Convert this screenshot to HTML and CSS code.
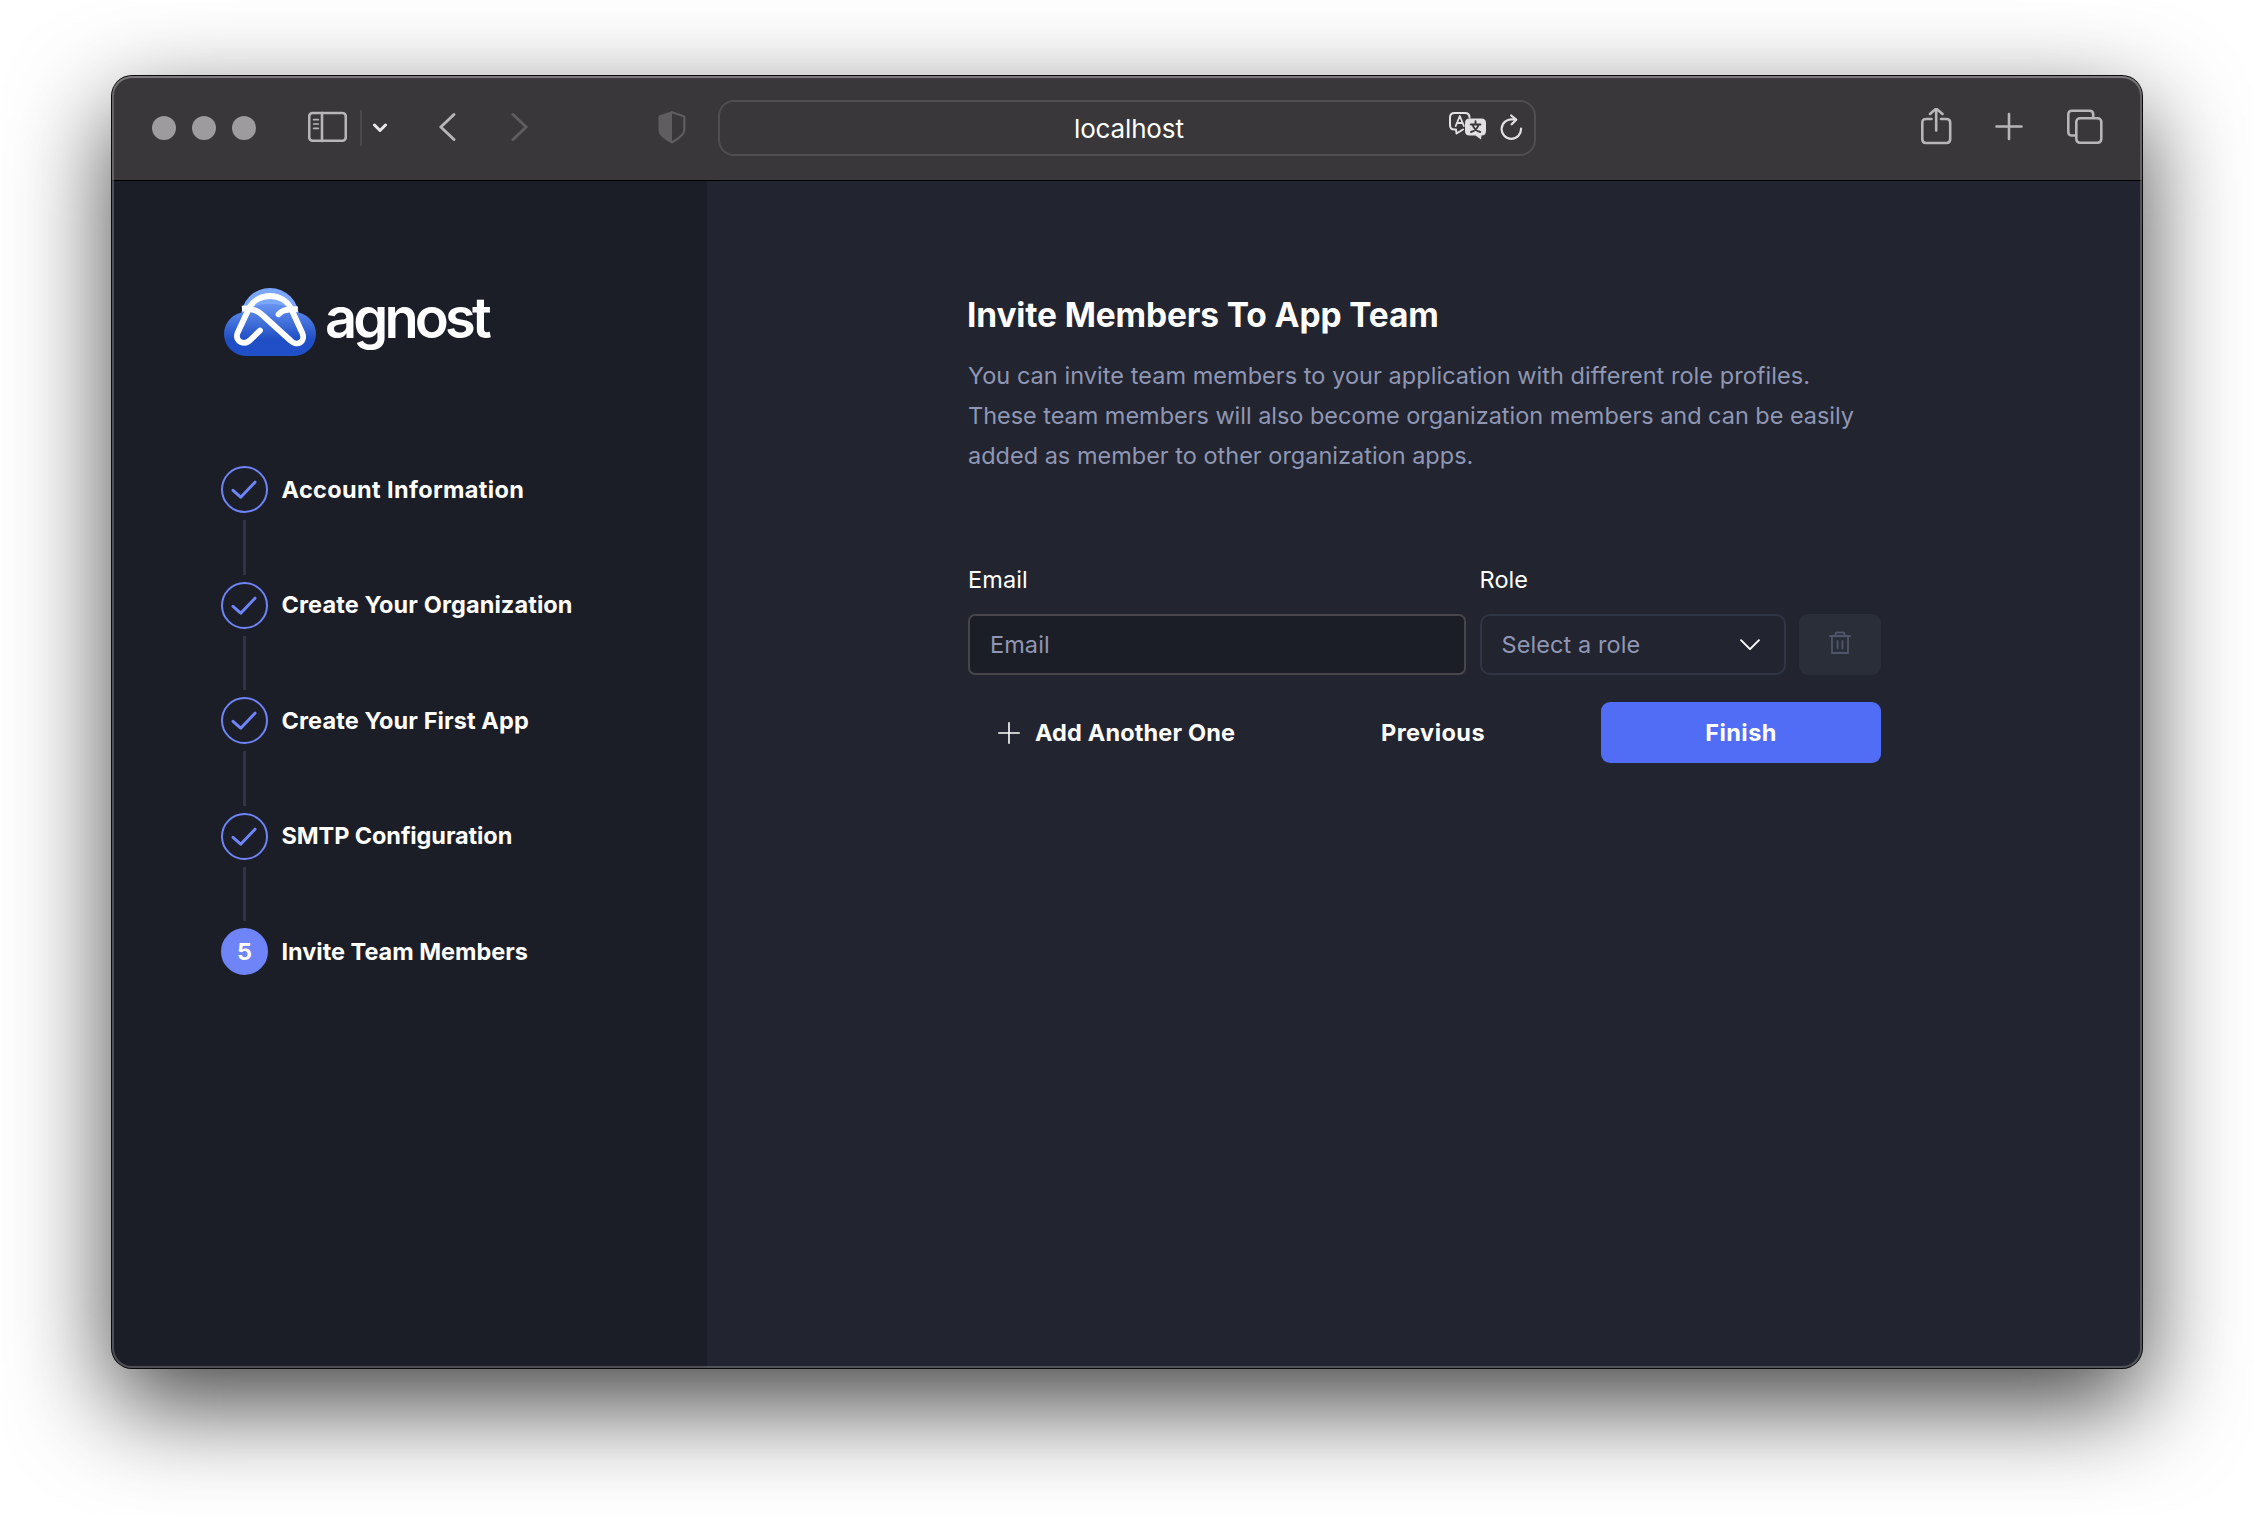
FILE: index.html
```
<!DOCTYPE html>
<html lang="en">
<head>
<meta charset="utf-8">
<title>Invite Members</title>
<link rel="stylesheet" href="styles.css">
</head>
<body>
<div class="window">
  <header class="toolbar">
    <div class="lights"><i></i><i></i><i></i></div>
    <svg class="ico side" width="39" height="40" viewBox="0 0 39 40"><rect x="1.2" y="5" width="36.6" height="27.8" rx="3.5"/><path d="M14 5v28"/><path class="fine" d="M5.7 11.7h4.6M5.7 16h4.6M5.7 20.4h4.6"/></svg>
    <span class="divider"></span>
    <svg class="ico menu" width="14" height="40" viewBox="0 0 14 40"><path d="M1.5 17l5.5 5.5 5.500-5.500"/></svg>
    <svg class="ico back" width="17" height="40" viewBox="0 0 17 40"><path d="M15 6.500L1.800 19 15 31.500"/></svg>
    <svg class="ico forward" width="17" height="40" viewBox="0 0 17 40"><path d="M2 6.500L15.200 19 2 31.500"/></svg>
    <svg class="shield" width="28" height="40" viewBox="0 0 28 40"><path class="half" d="M14 3.200L1.500 7.200Q.5 7.600 .5 8.800V22c0 6 7 10 13.500 13.500z"/><path class="line" d="M14 4.300L25.700 8.200q.6.300.6 1V22c0 5-6.300 9-12.300 12.300"/></svg>
    <div class="address">
      <span class="host">localhost</span>
      <svg class="translate" width="38" height="30" viewBox="0 0 38 30"><path class="bubble" d="M14 17.500L7.500 21.500 7 17.500H5.500Q1 17.500 1 13V5.500Q1 1 5.500 1H16q4.500 0 4.500 4.500"/><path class="a" d="M6.700 14L10.800 4l4.100 10M8 11h5.400"/><path class="solid" d="M20.500 6.500h12q4.500 0 4.500 4.500v8q0 4.500-4.500 4.500l-.5 4-5.500-4h-6q-4.500 0-4.500-4.500v-8q0-4.500 4.500-4.500z"/><path class="glyph" d="M26.500 9.200v3M21.800 12.500h9.600M23.500 12.700q2 5.500 7.700 7.300M29.700 12.700q-2 5.500-7.700 7.300"/></svg>
      <svg class="reload" width="23" height="27" viewBox="0 0 23 27"><path d="M21 14.500A9.700 9.700 0 1 1 12.500 5.500H16M11.200 1.500l5 4.200-4.500 4.600"/></svg>
    </div>
    <svg class="ico share" width="31" height="40" viewBox="0 0 31 40"><path d="M10.500 11H5q-3.700 0-3.700 3.700v16.600q0 3.700 3.700 3.700h20.500q3.700 0 3.700-3.700V14.700q0-3.700-3.700-3.700h-5.500M15.200 22.500V1M9 6l6.200-5.500L21.500 6"/></svg>
    <svg class="ico plus" width="28" height="40" viewBox="0 0 28 40"><path d="M14 6v25M1.500 18.500h25"/></svg>
    <svg class="ico tabs" width="36" height="40" viewBox="0 0 36 40"><path d="M9 27.500H5q-3.700 0-3.700-3.700V6.500q0-3.700 3.700-3.700h17.500q3.700 0 3.700 3.700v2.500"/><rect x="9.300" y="10.300" width="25" height="24.500" rx="3.700"/></svg>
  </header>

  <div class="page">
    <aside class="sidebar">
      <div class="logo">
        <svg width="92" height="68" viewBox="0 0 92 68">
          <defs>
            <linearGradient id="dome" x1="0" y1="0" x2="0" y2="1"><stop offset="0" stop-color="#7aa6fb"/><stop offset="1" stop-color="#7aa6fb"/></linearGradient>
            <linearGradient id="body" gradientUnits="userSpaceOnUse" x1="0" y1="10" x2="0" y2="68"><stop offset="0" stop-color="#739ff8"/><stop offset=".72" stop-color="#1f4ec5"/><stop offset="1" stop-color="#2050c8"/></linearGradient>
          </defs>
          <circle cx="46" cy="29" r="29" fill="url(#dome)"/>
          <path fill="url(#body)" d="M22 24C26 18 34 16 46 16s20 2 24 8a22 22 0 0 1 0 44H22a22 22 0 0 1 0-44z"/>
          <g class="mark"><path class="end" d="M18 20.700Q25 20 29.500 21.700M73.800 21.300Q67 20.800 62 22"/><path d="M36 42.500L26.500 51.800C21 57.500 10.500 54.500 13.500 45L24.500 21.500C32 3.500 60 3.500 67.500 21.500L78.300 45C82 54 73 59 66.500 52.500L39.500 28Q33 21.500 25.500 21.200M54.500 26.300Q58 22.200 63 21.800"/></g>
        </svg>
        <span class="brand">agnost</span>
      </div>
      <ol class="steps">
        <li class="step"><span class="dot"><svg width="26" height="20" viewBox="0 0 26 20"><path d="M2 10.300l7.700 6.900L24 2.200"/></svg></span><b class="s1">Account Information</b></li>
        <li class="step"><span class="dot"><svg width="26" height="20" viewBox="0 0 26 20"><path d="M2 10.300l7.700 6.900L24 2.200"/></svg></span><b class="s2">Create Your Organization</b></li>
        <li class="step"><span class="dot"><svg width="26" height="20" viewBox="0 0 26 20"><path d="M2 10.300l7.700 6.900L24 2.200"/></svg></span><b class="s3">Create Your First App</b></li>
        <li class="step"><span class="dot"><svg width="26" height="20" viewBox="0 0 26 20"><path d="M2 10.300l7.700 6.900L24 2.200"/></svg></span><b class="s4">SMTP Configuration</b></li>
        <li class="step current"><span class="dot">5</span><b class="s5">Invite Team Members</b></li>
      </ol>
    </aside>

    <main class="main">
      <h1>Invite Members To App Team</h1>
      <p class="intro"><span class="l1">You can invite team members to your application with different role profiles.</span><span class="l2">These team members will also become organization members and can be easily</span><span class="l3">added as member to other organization apps.</span></p>
      <div class="fields">
        <span class="label">Email</span><span class="label">Role</span><span></span>
        <div class="input">Email</div>
        <div class="select">Select a role<svg width="22" height="14" viewBox="0 0 22 14"><path d="M2 2.200l9 9 9-9"/></svg></div>
        <div class="trash"><svg width="22" height="24" viewBox="0 0 22 24"><path d="M1 5h20M6.500 5V3q0-1.500 1.500-1.500h6q1.500 0 1.500 1.500v2M3 5v17h16V5M8.500 10v7.500M13.500 10v7.500"/></svg></div>
      </div>
      <div class="actions">
        <div class="button add"><svg width="22" height="22" viewBox="0 0 22 22"><path d="M11 .8v20.400M.8 11h20.400"/></svg><span>Add Another One</span></div>
        <div class="button previous">Previous</div>
        <div class="button finish">Finish</div>
      </div>
    </main>
  </div>
</div>
</body>
</html>
```
FILE: styles.css
```
* { box-sizing: border-box; }
body {
  margin: 0;
  width: 2254px;
  height: 1516px;
  padding: 76px 112px 0;
  background: #fff;
  overflow: hidden;
  color: #fff;
  font-family: Inter, "Liberation Sans", sans-serif;
  font-size: 23.5px;
}
svg { flex: none; display: block; fill: none; stroke-linecap: round; stroke-linejoin: round; }

.window {
  position: relative;
  width: 2030px;
  height: 1292px;
  border-radius: 20px;
  background: #22242f;
  box-shadow: 0 0 0 1px #0a0a0a, 0 36px 100px rgba(0, 0, 0, .74);
}
/* light rim drawn over the window edge */
.window::after {
  content: "";
  position: absolute;
  inset: 0;
  border-radius: 20px;
  box-shadow: inset 0 0 0 2px rgba(255, 255, 255, .22), inset 0 2px 1px rgba(255, 255, 255, .16);
}

.toolbar {
  display: flex;
  align-items: center;
  height: 105px;
  padding: 0 0 1px 40px;
  border-bottom: 1px solid #000;
  border-radius: 20px 20px 0 0;
  background: #3a373a;
}
.lights { display: flex; gap: 16px; }
.lights i { width: 24px; height: 24px; border-radius: 50%; background: #9e9b9e; }
.ico { stroke: #b8b5b8; stroke-width: 2.6; }
.side { margin-left: 52px; }
.side .fine { stroke-width: 1.7; }
.divider { width: 2px; height: 36px; margin-left: 13px; background: #4c494c; }
.menu { margin-left: 11px; stroke: #e8e6e8; stroke-width: 3; }
.back { margin-left: 52px; stroke-width: 2.9; }
.forward { margin-left: 55px; stroke: #605d60; stroke-width: 2.9; }
.shield { margin-left: 130px; }
.shield .half { fill: #605d60; }
.shield .line { stroke: #605d60; stroke-width: 2.2; }
.address {
  display: flex;
  align-items: center;
  width: 818px;
  height: 56px;
  margin-left: 32px;
  padding-left: 354px;
  border: 2px solid #514e51;
  border-radius: 16px;
}
.host { width: 375px; padding-top: 2px; font-size: 26px; line-height: 30px; letter-spacing: -.15px; }
.translate { margin-top: -1px; }
.translate .bubble { stroke: #e2e0e2; stroke-width: 2; }
.translate .a { stroke: #e2e0e2; stroke-width: 1.8; }
.translate .solid { fill: #e2e0e2; }
.translate .glyph { stroke: #3a373a; stroke-width: 1.9; }
.reload { margin: -1px 0 0 13px; stroke: #e2e0e2; stroke-width: 2.2; }
.share { margin-left: 385px; }
.plus { margin-left: 43px; }
.tabs { margin-left: 44px; }

.page { display: flex; height: 1187px; border-radius: 0 0 20px 20px; overflow: hidden; }
.sidebar { width: 595px; padding: 107px 0 0 109px; background: #1b1d27; }
.logo { display: flex; height: 68px; margin-left: 3px; }
.mark { stroke: #fff; stroke-width: 5.8; }
.mark .end { stroke-linecap: butt; }
.brand { margin: -4px 0 0 9px; font-weight: 600; font-size: 56px; line-height: 68px; letter-spacing: -3.86px; }
.steps { display: grid; gap: 68.5px; margin: 110px 0 0; padding: 0; list-style: none; }
.step { position: relative; display: flex; align-items: center; gap: 13.5px; height: 47px; }
.step:not(.current)::after {
  content: "";
  position: absolute;
  left: 22px;
  top: 54px;
  width: 3px;
  height: 54.5px;
  background: #2f3545;
}
.dot {
  display: flex;
  align-items: center;
  justify-content: center;
  width: 47px;
  height: 47px;
  border: 2px solid #6e84f7;
  border-radius: 50%;
  font-weight: 700;
}
.dot svg { stroke: #6e84f7; stroke-width: 3; margin: 1px 1px 0 0; }
.current .dot { background: #6e84f7; }
.step b { font-weight: 650; padding-bottom: 1px; white-space: nowrap; }
.s1 { letter-spacing: .37px; }
.s2, .s3 { letter-spacing: .1px; }
.s4 { letter-spacing: -.1px; }
.s5 { letter-spacing: -.02px; }

.main { width: 1435px; padding: 110px 0 0 261px; }
h1 { margin: 0 0 17px -1px; font-size: 33.5px; line-height: 48px; font-weight: 700; letter-spacing: -.14px; }
.intro { margin: 0 0 88px; line-height: 40px; color: #8f97b4; }
.intro span { display: block; white-space: nowrap; }
.l1 { letter-spacing: .045px; }
.l2 { letter-spacing: -.035px; }
.l3 { letter-spacing: 0; }
.fields { display: grid; grid-template-columns: 498px 306px 82px; column-gap: 13.5px; row-gap: 20px; }
.label { position: relative; top: 1px; line-height: 30px; letter-spacing: .1px; }
.input, .select, .trash { display: flex; align-items: center; height: 61px; color: #8f97b4; letter-spacing: .08px; }
.input { padding-left: 20px; border: 2px solid #47474b; border-radius: 7px; background: #1b1d27; }
.select { justify-content: space-between; padding: 0 23px 0 20px; border: 2px solid #2f3545; border-radius: 10px; }
.select svg { stroke: #fff; stroke-width: 1.9; }
.trash { justify-content: center; border-radius: 9px; background: #292e39; }
.trash svg { stroke: #50566a; stroke-width: 1.8; margin-top: -3px; }
.actions { display: grid; grid-template-columns: 297px 280px 280px; gap: 28px; margin-top: 27px; }
.button { display: flex; align-items: center; justify-content: center; height: 61px; border-radius: 9px; font-weight: 700; letter-spacing: .45px; }
.add { gap: 15px; letter-spacing: .15px; }
.add svg { stroke: #fff; stroke-width: 1.6; }
.finish { background: #516cf5; }
```
